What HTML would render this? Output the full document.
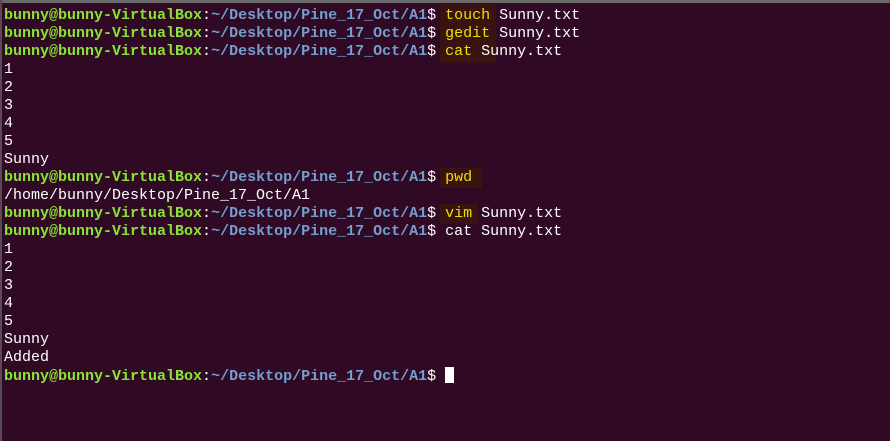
<!DOCTYPE html>
<html><head><style>
html,body{margin:0;padding:0;}
body{width:890px;height:441px;background:#300a24;overflow:hidden;position:relative;font-family:"Liberation Mono",monospace;font-size:15px;color:#fff;}
.top{position:absolute;left:0;top:0;width:890px;height:3px;background:#6a6a6a;}
.left{position:absolute;left:0;top:0;width:2px;height:441px;background:#5a4a55;}
.hl{position:absolute;background:#38130f;}
pre{margin:0;position:absolute;left:4px;top:7px;font:inherit;line-height:18px;}
.g{color:#8ae234;font-weight:bold}
.b{color:#729fcf;font-weight:bold}
.y{color:#ece000}
.cur{display:inline-block;width:9px;height:16px;background:#fff;vertical-align:-3px;}
</style></head><body>
<div class="top"></div><div class="left"></div>
<div class="hl" style="left:440px;top:3px;width:56px;height:60px"></div>
<div class="hl" style="left:440px;top:168px;width:42px;height:20px"></div>
<div class="hl" style="left:440px;top:204px;width:38px;height:20px"></div>
<pre><span class="g">bunny@bunny-VirtualBox</span>:<span class="b">~/Desktop/Pine_17_Oct/A1</span>$ <span class="y">touch</span> Sunny.txt
<span class="g">bunny@bunny-VirtualBox</span>:<span class="b">~/Desktop/Pine_17_Oct/A1</span>$ <span class="y">gedit</span> Sunny.txt
<span class="g">bunny@bunny-VirtualBox</span>:<span class="b">~/Desktop/Pine_17_Oct/A1</span>$ <span class="y">cat</span> Sunny.txt
1
2
3
4
5
Sunny
<span class="g">bunny@bunny-VirtualBox</span>:<span class="b">~/Desktop/Pine_17_Oct/A1</span>$ <span class="y">pwd</span>
/home/bunny/Desktop/Pine_17_Oct/A1
<span class="g">bunny@bunny-VirtualBox</span>:<span class="b">~/Desktop/Pine_17_Oct/A1</span>$ <span class="y">vim</span> Sunny.txt
<span class="g">bunny@bunny-VirtualBox</span>:<span class="b">~/Desktop/Pine_17_Oct/A1</span>$ cat Sunny.txt
1
2
3
4
5
Sunny
Added
<span class="g">bunny@bunny-VirtualBox</span>:<span class="b">~/Desktop/Pine_17_Oct/A1</span>$ <span class="cur"></span></pre>
</body></html>
